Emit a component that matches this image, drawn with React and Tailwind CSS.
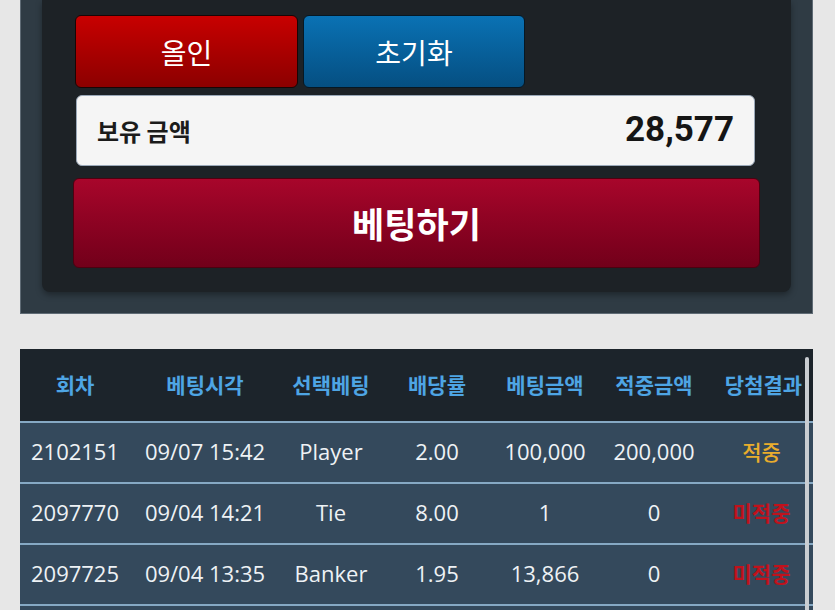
import React from 'react'

const rows = [
  { round: '2102151', time: '09/07 15:42', pick: 'Player', odds: '2.00', bet: '100,000', win: '200,000', result: '적중', hit: true },
  { round: '2097770', time: '09/04 14:21', pick: 'Tie', odds: '8.00', bet: '1', win: '0', result: '미적중', hit: false },
  { round: '2097725', time: '09/04 13:35', pick: 'Banker', odds: '1.95', bet: '13,866', win: '0', result: '미적중', hit: false }
]

const cols = 'grid grid-cols-[110px_150px_102px_110px_106px_112px_1fr]'

export default function App() {
  return (
    <div className="min-h-screen bg-[#e7e7e7] pb-10 font-['Noto_Sans','Noto_Sans_CJK_KR',sans-serif]">
      {/* bet panel */}
      <div className="mx-[20px] w-[793px] border-x border-b border-[#5f6b75] bg-[#2f3b44] px-[21px] pb-[21px]">
        <div className="rounded-b-lg bg-[#1d2226] px-[31px] pt-[15px] pb-[24px] shadow-[0_3px_6px_rgba(0,0,0,0.35)] font-['Noto_Sans_CJK_KR',sans-serif]">
          <div className="ml-[2px] flex gap-[5px]">
            <button className="h-[73px] w-[223px] rounded-md border border-[#1a0505] bg-gradient-to-b from-[#c80000] to-[#8c0000] text-[28px] text-white">
              올인
            </button>
            <button className="h-[73px] w-[222px] rounded-md border border-[#061824] bg-gradient-to-b from-[#0a72b4] to-[#054f82] text-[28px] text-white">
              초기화
            </button>
          </div>
          <div className="mt-[7px] ml-[3px] mr-[5px] flex h-[71px] items-center justify-between rounded-md border border-[#9aa8b8] bg-[#f5f5f5] px-[20px]">
            <span className="text-[24px] font-bold text-[#1b1b1b]">보유 금액</span>
            <span className="font-['Roboto','Noto_Sans',sans-serif] text-[35px] font-bold text-[#151515]">28,577</span>
          </div>
          <button className="mt-[12px] flex h-[90px] w-full items-center justify-center rounded-md border border-[#4e0010] bg-gradient-to-b from-[#a8062b] to-[#72001a] text-[35px] font-bold text-white">
            베팅하기
          </button>
        </div>
      </div>

      {/* history table */}
      <div className="relative mx-[20px] mt-[35px] w-[793px] bg-[#34495c]">
        <div className={`${cols} h-[72px] items-center bg-[#1c242b] text-center font-['Noto_Sans_CJK_KR',sans-serif] text-[21px] font-bold text-[#4ea5e4]`}>
          <div>회차</div>
          <div>베팅시각</div>
          <div>선택베팅</div>
          <div>배당률</div>
          <div>베팅금액</div>
          <div>적중금액</div>
          <div className="pl-[4px]">당첨결과</div>
        </div>
        {rows.map((r) => (
          <div key={r.round} className={`${cols} h-[61px] items-center border-t-2 border-[#86a9c4] pb-[2px] text-center font-['Open_Sans','Noto_Sans_CJK_KR',sans-serif] text-[22px] text-[#eef2f5]`}>
            <div>{r.round}</div>
            <div>{r.time}</div>
            <div>{r.pick}</div>
            <div>{r.odds}</div>
            <div>{r.bet}</div>
            <div>{r.win}</div>
            <div className={r.hit ? "font-['Noto_Sans_CJK_KR',sans-serif] text-[21px] font-medium text-[#e9ad2c]" : "font-['Noto_Sans_CJK_KR',sans-serif] text-[21px] font-bold text-[#c0121c]"}>
              {r.result}
            </div>
          </div>
        ))}
        <div className="h-[40px] border-t-2 border-[#86a9c4]" />
        <div className="absolute right-[4px] top-[8px] bottom-0 w-[4px] rounded-full bg-[#c9cdd1]" />
      </div>
    </div>
  )
}
